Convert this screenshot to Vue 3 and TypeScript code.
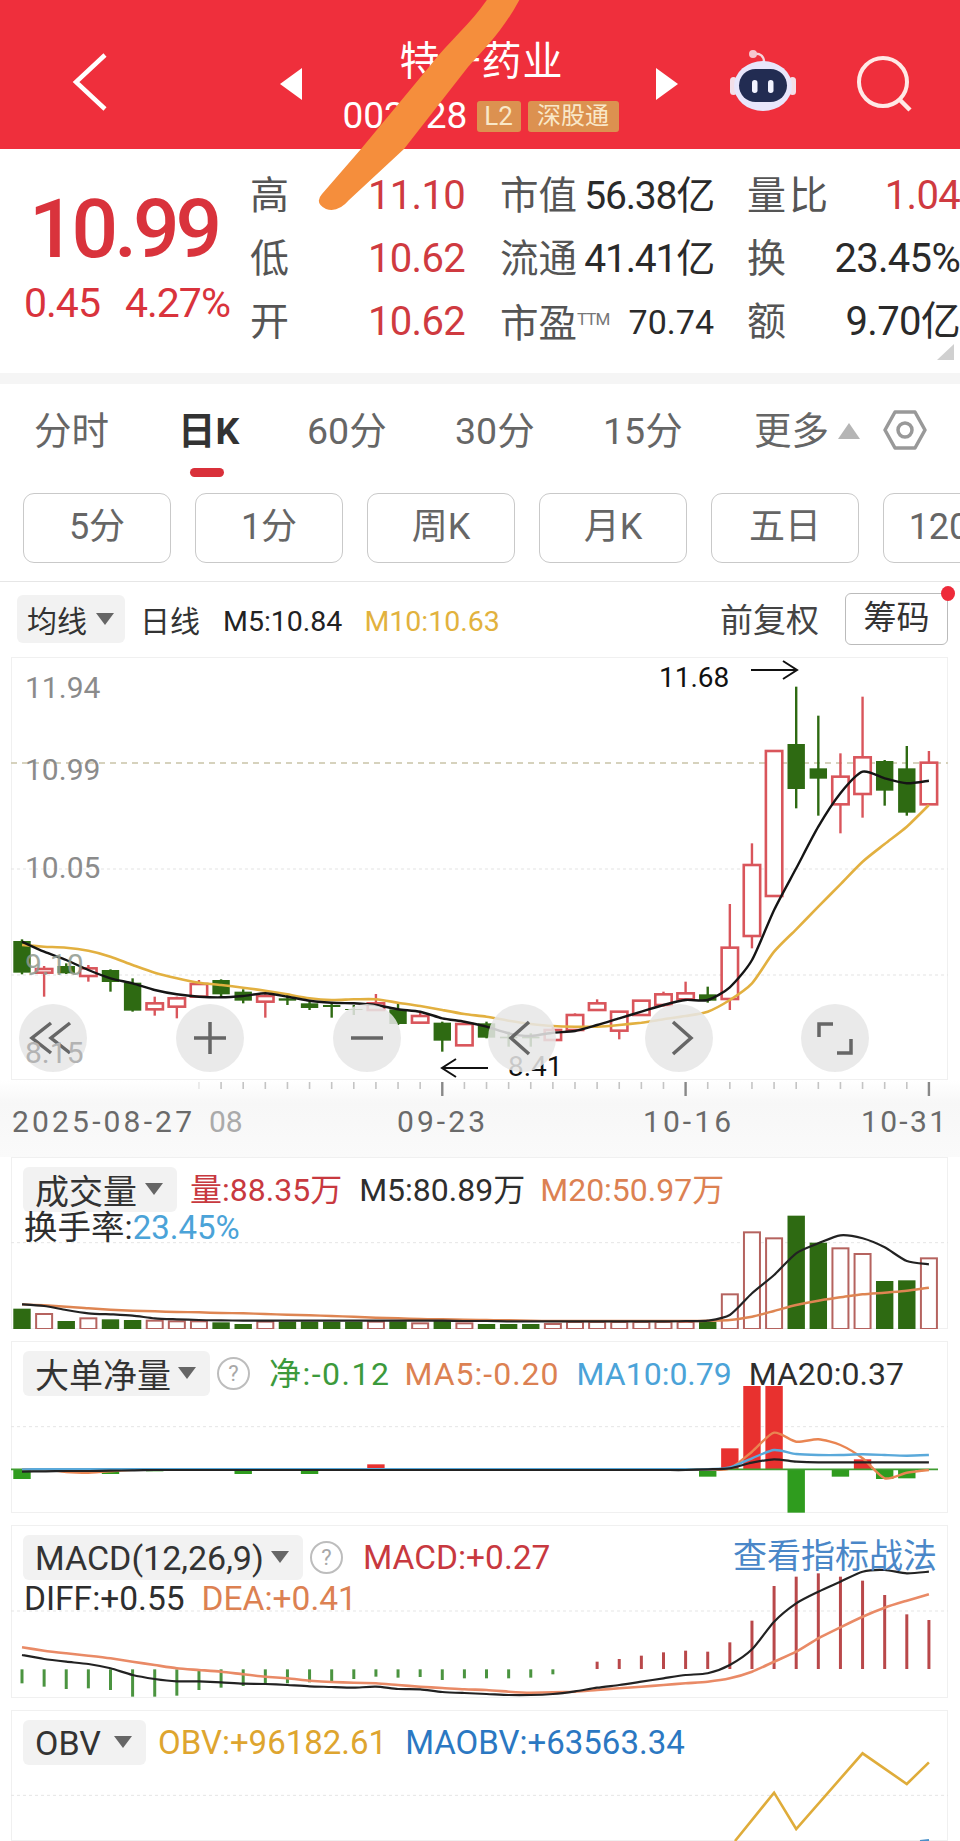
<script setup lang="ts">
type Candle = [string, number, number, number, number]

const cx = (i: number) => 22 + 22.12 * i
const my = (z: number) => 650 + z / 3
const ny = (z: number) => 1150 + z / 3
const ly = (z: number) => 1510 + z / 3

function smooth(ys: number[], conv: (z: number) => number): string {
  const p = ys.map((y, i) => [cx(i), conv(y)])
  let d = `M${p[0][0]} ${p[0][1]}`
  for (let i = 0; i < p.length - 1; i++) {
    const a = p[Math.max(i - 1, 0)]
    const b = p[i]
    const c = p[i + 1]
    const e = p[Math.min(i + 2, p.length - 1)]
    const k = 0.12
    d += `C${(b[0] + (c[0] - a[0]) * k).toFixed(1)} ${(b[1] + (c[1] - a[1]) * k).toFixed(1)} ${(c[0] - (e[0] - b[0]) * k).toFixed(1)} ${(c[1] - (e[1] - b[1]) * k).toFixed(1)} ${c[0].toFixed(1)} ${c[1].toFixed(1)}`
  }
  return d
}

const candles: Candle[] = [
  ['g', 868, 973, 873, 968], ['r', 948, 1040, 957, 968], ['g', 940, 972, 948, 970], ['r', 945, 995, 955, 978],
  ['g', 958, 1025, 960, 996], ['g', 985, 1085, 998, 1082], ['r', 1040, 1097, 1060, 1078], ['r', 1040, 1105, 1045, 1070],
  ['r', 990, 1040, 1002, 1040], ['g', 988, 1040, 990, 1033], ['g', 1018, 1060, 1025, 1052], ['r', 1030, 1103, 1038, 1055],
  ['g', 1035, 1065, 1045, 1052], ['g', 1055, 1080, 1060, 1074], ['g', 1058, 1103, 1065, 1071], ['g', 1065, 1095, 1077, 1080],
  ['r', 1032, 1080, 1060, 1080], ['g', 1060, 1125, 1078, 1122], ['r', 1085, 1120, 1098, 1118], ['g', 1115, 1205, 1118, 1172],
  ['r', 1120, 1188, 1122, 1186], ['g', 1115, 1165, 1120, 1163], ['g', 1145, 1190, 1160, 1165], ['g', 1150, 1190, 1160, 1165],
  ['r', 1130, 1172, 1140, 1170], ['r', 1090, 1140, 1095, 1140], ['r', 1048, 1082, 1060, 1080], ['r', 1085, 1168, 1085, 1142],
  ['r', 1050, 1095, 1052, 1095], ['r', 1025, 1070, 1033, 1065], ['r', 995, 1050, 1030, 1048], ['g', 1010, 1058, 1033, 1052],
  ['r', 762, 1080, 893, 1047], ['r', 580, 895, 645, 858], ['r', 303, 738, 303, 738], ['g', 110, 475, 282, 417],
  ['g', 197, 497, 355, 386], ['r', 310, 550, 380, 463], ['r', 140, 503, 322, 432], ['g', 330, 467, 333, 422],
  ['g', 288, 497, 355, 488], ['r', 303, 463, 338, 463]
]
const m5 = [875, 905, 930, 960, 985, 1000, 1020, 1033, 1040, 1042, 1038, 1030, 1040, 1052, 1058, 1060, 1065, 1078, 1085, 1105, 1115, 1130, 1150, 1158, 1148, 1143, 1125, 1105, 1085, 1065, 1050, 1050, 1012, 930, 780, 655, 530, 430, 365, 385, 400, 392]
const m10 = [885, 890, 893, 902, 920, 945, 968, 985, 998, 1005, 1013, 1022, 1033, 1045, 1050, 1048, 1048, 1058, 1068, 1080, 1092, 1100, 1112, 1122, 1128, 1130, 1130, 1125, 1118, 1108, 1098, 1085, 1050, 1000, 905, 838, 770, 703, 635, 582, 530, 465]

const volTops = [476, 492, 513, 505, 508, 510, 512, 514, 514, 517, 522, 515, 515, 515, 515, 515, 515, 514, 520, 513, 520, 522, 522, 522, 522, 516, 516, 516, 516, 516, 516, 515, 433, 247, 265, 197, 278, 295, 312, 393, 391, 325]
const volM5 = [463, 468, 480, 490, 493, 497, 505, 508, 510, 511, 512, 512, 512, 512, 512, 512, 512, 512, 512, 512, 513, 513, 514, 514, 514, 514, 514, 514, 514, 514, 513, 512, 495, 430, 375, 310, 280, 256, 265, 292, 333, 343]
const volM20 = [463, 466, 470, 475, 479, 482, 484, 486, 487, 489, 490, 492, 494, 496, 498, 500, 503, 505, 507, 508, 509, 510, 511, 512, 513, 513, 513, 513, 513, 513, 513, 512, 510, 500, 483, 465, 452, 442, 433, 428, 422, 413]

const netBars: [number, string, number][] = [
  [0, 'g', 987], [4, 'g', 972], [6, 'g', 964], [10, 'g', 972], [13, 'g', 972], [16, 'r', 943], [31, 'g', 980], [32, 'r', 895],
  [33, 'r', 708], [34, 'r', 708], [35, 'g', 1088], [37, 'g', 980], [38, 'r', 928], [39, 'g', 987], [40, 'g', 985]
]
const flat = (v: number, n: number) => Array.from({ length: n }, () => v)
const netMa5 = [...flat(958, 2), 966, 968, 964, ...flat(959, 27), 955, 905, 848, 875, 868, 885, 925, 985, 968, 960]
const netMa10 = [...flat(958, 32), 952, 925, 900, 912, 915, 915, 913, 915, 917, 915]
const netMa20 = [965, 964, 963, 963, 962, 961, ...flat(960, 25), 958, 955, 938, 928, 935, 937, 937, 937, 937, 937, 937]

const macdBars: [string, number][] = [
  ['g', 520], ['g', 530], ['g', 537], ['g', 535], ['g', 540], ['g', 560], ['g', 560], ['g', 557], ['g', 540], ['g', 533], ['g', 528],
  ['g', 525], ['g', 520], ['g', 517], ['g', 513], ['g', 507], ['g', 500], ['g', 503], ['g', 501], ['g', 510], ['g', 505], ['g', 505],
  ['g', 505], ['g', 503], ['g', 493], ['g', 478], ['r', 455], ['r', 447], ['r', 437], ['r', 427], ['r', 422], ['r', 425], ['r', 397],
  ['r', 332], ['r', 228], ['r', 200], ['r', 190], ['r', 200], ['r', 212], ['r', 255], ['r', 313], ['r', 330]
]
const diff = [435, 447, 455, 462, 475, 495, 507, 514, 514, 517, 521, 522, 525, 529, 531, 533, 530, 537, 538, 546, 549, 552, 555, 555, 552, 544, 533, 525, 515, 505, 495, 490, 465, 418, 335, 280, 245, 215, 185, 180, 190, 185]
const dea = [412, 422, 430, 437, 445, 455, 465, 475, 480, 485, 493, 500, 505, 512, 516, 518, 520, 525, 530, 534, 538, 540, 545, 548, 547, 545, 540, 535, 530, 525, 520, 515, 505, 485, 455, 425, 385, 352, 320, 293, 272, 253]

const quoteRows = [
  { a: '高', b: '11.10', c: '市值', d: '56.38亿', e: '量比', f: '1.04', red: true, wide: true },
  { a: '低', b: '10.62', c: '流通', d: '41.41亿', e: '换', f: '23.45%', red: false },
  { a: '开', b: '10.62', c: '市盈', d: '70.74', e: '额', f: '9.70亿', red: false, ttm: true }
]
const tabs = [
  { t: '分时', w: 144 }, { t: '日K', w: 129, on: true }, { t: '60分', w: 148 }, { t: '30分', w: 148 }, { t: '15分', w: 151 }
]
const subs = ['5分', '1分', '周K', '月K', '五日', '120分']
const bubbles = [
  { x: 53, k: 'first' }, { x: 210, k: 'plus' }, { x: 367, k: 'minus' }, { x: 522, k: 'left' }, { x: 679, k: 'right' }, { x: 835, k: 'full' }
]
</script>

<template>
  <div class="page">
    <header class="top">
      <svg class="back" viewBox="0 0 40 60" width="40" height="60"><path d="M35 3 L6 30 L35 57" fill="none" stroke="#fff" stroke-width="4.5" /></svg>
      <svg class="arrow" viewBox="0 0 22 32" width="22" height="32"><path d="M22 0 V32 L0 16Z" fill="#fff" /></svg>
      <div class="name">
        <div class="title">特一药业</div>
        <div class="codeline">
          <span class="code">002728</span><span class="tag l2">L2</span><span class="tag sgt">深股通</span>
        </div>
      </div>
      <svg class="arrow" viewBox="0 0 22 32" width="22" height="32"><path d="M0 0 V32 L22 16Z" fill="#fff" /></svg>
      <svg class="robot" viewBox="0 0 68 62" width="68" height="62">
        <path d="M35 12 C35 6 31 3 25 4" fill="none" stroke="#f4d4dc" stroke-width="2.4" />
        <circle cx="24" cy="4" r="4" fill="#f6c6cf" />
        <rect x="1" y="27" width="7" height="18" rx="3.5" fill="#f3dfe8" />
        <rect x="60" y="27" width="7" height="18" rx="3.5" fill="#f3dfe8" />
        <ellipse cx="34" cy="36" rx="29" ry="25" fill="#e8e6fb" />
        <rect x="10" y="19" width="48" height="33" rx="16.5" fill="#222c52" />
        <rect x="23" y="30" width="5.5" height="13" rx="2.7" fill="#f2f3ff" />
        <rect x="39" y="30" width="5.5" height="13" rx="2.7" fill="#f2f3ff" />
      </svg>
      <svg class="search" viewBox="0 0 56 56" width="56" height="56"><circle cx="26" cy="26" r="24" fill="none" stroke="#ffe9e6" stroke-width="4" /><path d="M43 44 L53 54" stroke="#ffe9e6" stroke-width="4.5" /></svg>
    </header>

    <section class="quote">
      <div class="now">
        <div class="price">10.99</div>
        <div class="chg"><span>0.45</span><span>4.27%</span></div>
      </div>
      <div class="qgrid">
        <template v-for="r in quoteRows" :key="r.a">
          <span class="ql">{{ r.a }}</span>
          <span class="qv red first">{{ r.b }}</span>
          <span class="ql small">{{ r.c }}<i v-if="r.ttm" class="ttm">TTM</i></span>
          <span class="qv dark mid" :class="{ narrow: r.ttm }">{{ r.d }}</span>
          <span class="ql" :class="{ spaced: r.wide }">{{ r.e }}</span>
          <span class="qv dark" :class="{ red: r.red }">{{ r.f }}</span>
        </template>
      </div>
      <i class="corner"></i>
    </section>
    <div class="strip"></div>

    <nav class="tabs">
      <span v-for="t in tabs" :key="t.t" class="tab" :class="{ on: t.on }" :style="{ width: t.w + 'px' }">{{ t.t }}</span>
      <span class="tab more">更多<i class="up"></i></span>
      <svg class="hex" viewBox="0 0 44 40" width="44" height="40"><path d="M12 2 H32 L42 20 L32 38 H12 L2 20Z" fill="none" stroke="#999" stroke-width="3.5" stroke-linejoin="round" /><circle cx="22" cy="20" r="7" fill="none" stroke="#999" stroke-width="3.5" /></svg>
    </nav>

    <div class="subs">
      <span v-for="s in subs" :key="s" class="sub">{{ s }}</span>
    </div>

    <div class="marow">
      <span class="pill small-pill">均线<i class="down"></i></span>
      <span class="ma-label">日线</span>
      <span class="ma-val">M5:10.84</span>
      <span class="ma-val gold">M10:10.63</span>
      <span class="fq">前复权</span>
      <span class="chips">筹码<i class="dot"></i></span>
    </div>

    <section class="panel main">
      <svg class="plot" viewBox="11 657 937 423">
        <line x1="11" x2="948" y1="763" y2="763" stroke="#c9c4a8" stroke-width="1.4" stroke-dasharray="6 5" />
        <line x1="11" x2="948" :y1="my(657)" :y2="my(657)" stroke="#e3e3e3" stroke-dasharray="3 3" />
        <line x1="11" x2="948" :y1="my(975)" :y2="my(975)" stroke="#e3e3e3" stroke-dasharray="3 3" />
        <g v-for="(c, i) in candles" :key="i">
          <line :x1="cx(i)" :x2="cx(i)" :y1="my(c[1])" :y2="my(c[2])" :stroke="c[0] === 'g' ? '#2e6a12' : '#d9555b'" stroke-width="2.4" />
          <rect v-if="c[0] === 'g'" :x="cx(i) - 8.7" :y="my(c[3])" width="17.4" :height="(c[4] - c[3]) / 3" fill="#2e6a12" />
          <rect v-else :x="cx(i) - 8.2" :y="my(c[3])" width="16.4" :height="(c[4] - c[3]) / 3" fill="#fff" stroke="#d9555b" stroke-width="2.6" />
        </g>
        <path :d="smooth(m10, my)" fill="none" stroke="#e2b040" stroke-width="2.6" />
        <path :d="smooth(m5, my)" fill="none" stroke="#151515" stroke-width="2.4" />
        <g class="ylab">
          <text x="25" y="698">11.94</text>
          <text x="25" y="780">10.99</text>
          <text x="25" y="878">10.05</text>
          <text x="25" y="975" class="fade">9.10</text>
        </g>
        <text x="659" y="687" class="note">11.68</text>
        <path d="M751 670 H796 M783 661 L797 670 L783 679" fill="none" stroke="#111" stroke-width="2" />
        <text x="508" y="1076" class="note">8.41</text>
        <path d="M488 1068 H443 M456 1059 L442 1068 L456 1077" fill="none" stroke="#111" stroke-width="2" />
      </svg>
      <span v-for="b in bubbles" :key="b.k" class="bubble" :style="{ left: b.x - 45 + 'px' }">
        <svg viewBox="0 0 68 68" width="68" height="68">
          <path v-if="b.k === 'first'" d="M32 19 L13 34 L32 49 M51 19 L32 34 L51 49" fill="none" stroke="#666" stroke-width="3.5" />
          <path v-else-if="b.k === 'plus'" d="M18 34 H50 M34 18 V50" fill="none" stroke="#666" stroke-width="3.5" />
          <path v-else-if="b.k === 'minus'" d="M18 34 H50" fill="none" stroke="#666" stroke-width="3.5" />
          <path v-else-if="b.k === 'left'" d="M41 18 L23 34 L41 50" fill="none" stroke="#666" stroke-width="3.5" />
          <path v-else-if="b.k === 'right'" d="M28 18 L46 34 L28 50" fill="none" stroke="#666" stroke-width="3.5" />
          <path v-else d="M18 33 V20 H32 M50 35 V49 H36" fill="none" stroke="#666" stroke-width="3.5" />
        </svg>
      </span>
      <span class="low-label">8.15</span>
    </section>

    <svg class="axis" viewBox="0 1080 960 77" width="960" height="77">
      <defs>
        <linearGradient id="ax" x1="0" x2="0" y1="0" y2="1"><stop offset="0" stop-color="#fff" /><stop offset=".3" stop-color="#f7f7f7" /><stop offset="1" stop-color="#fafafa" /></linearGradient>
      </defs>
      <rect x="0" y="1080" width="960" height="77" fill="url(#ax)" />
      <g v-for="i in 34" :key="i">
        <line :x1="cx(i + 7)" :x2="cx(i + 7)" y1="1082" :y2="[12, 23, 34].includes(i) ? 1096 : 1089" :stroke="i === 1 ? '#e6e6e6' : [12, 23, 34].includes(i) ? '#888' : '#c4c4c4'" :stroke-width="[12, 23, 34].includes(i) ? 2.4 : 1.6" />
      </g>
      <g class="xlab">
        <text x="12" y="1132" textLength="180">2025-08-27</text>
        <text x="209" y="1132" class="faded">08</text>
        <text x="397" y="1132" textLength="88">09-23</text>
        <text x="643" y="1132" textLength="88">10-16</text>
        <text x="861" y="1132" textLength="85">10-31</text>
      </g>
    </svg>

    <section class="panel vol">
      <svg class="plot" viewBox="11 1157 937 172">
        <line x1="11" x2="948" :y1="ny(278)" :y2="ny(278)" stroke="#e5e5e5" stroke-dasharray="3 3" />
        <g v-for="(t, i) in volTops" :key="i">
          <rect v-if="candles[i][0] === 'g'" :x="cx(i) - 8.7" :y="ny(t)" width="17.4" :height="(538 - t) / 3" fill="#2e6a12" />
          <rect v-else :x="cx(i) - 8" :y="ny(t)" width="16" :height="(537 - t) / 3" fill="#fff" stroke="#b5635f" stroke-width="2" />
        </g>
        <path :d="smooth(volM20, ny)" fill="none" stroke="#de8552" stroke-width="2.4" />
        <path :d="smooth(volM5, ny)" fill="none" stroke="#222" stroke-width="2.2" />
      </svg>
      <div class="legend">
        <span class="pill w154">成交量<i class="down"></i></span>
        <span class="lg red g13">量:88.35万</span>
        <span class="lg dark g17">M5:80.89万</span>
        <span class="lg orange g15">M20:50.97万</span>
      </div>
      <div class="legend2"><span class="lg big dark">换手率:</span><span class="lg big2 blue">23.45%</span></div>
    </section>

    <section class="panel net">
      <svg class="plot" viewBox="11 1341 937 172">
        <line x1="11" x2="948" :y1="ny(830)" :y2="ny(830)" stroke="#e5e5e5" stroke-dasharray="3 3" />
        <g v-for="b in netBars" :key="b[0]">
          <rect :x="cx(b[0]) - 8.7" :y="ny(Math.min(b[2], 958))" width="17.4" :height="Math.abs(b[2] - 958) / 3" :fill="b[1] === 'r' ? '#e8312f' : '#2f9c1e'" />
        </g>
        <line x1="11" x2="938" :y1="ny(958)" :y2="ny(958)" stroke="#3f9c30" stroke-width="1.8" />
        <path :d="smooth(netMa5, ny)" fill="none" stroke="#e98552" stroke-width="2.4" />
        <path :d="smooth(netMa10, ny)" fill="none" stroke="#5aa9da" stroke-width="2.4" />
        <path :d="smooth(netMa20, ny)" fill="none" stroke="#222" stroke-width="2.2" />
      </svg>
      <div class="legend">
        <span class="pill w187">大单净量<i class="down"></i></span>
        <span class="help">?</span>
        <span class="lg green g19 sp15">净:-0.12</span>
        <span class="lg orange g14 sp10">MA5:-0.20</span>
        <span class="lg blue g17">MA10:0.79</span>
        <span class="lg dark g17">MA20:0.37</span>
      </div>
    </section>

    <section class="panel macd">
      <svg class="plot" viewBox="11 1525 937 173">
        <line x1="11" x2="948" :y1="ly(303)" :y2="ly(303)" stroke="#e5e5e5" stroke-dasharray="3 3" />
        <g v-for="(b, i) in macdBars" :key="i">
          <line :x1="cx(i)" :x2="cx(i)" :y1="b[0] === 'g' ? ly(478) : ly(b[1])" :y2="b[0] === 'g' ? ly(b[1]) : ly(477)" :stroke="b[0] === 'g' ? '#4b9440' : '#b9484a'" stroke-width="3" />
        </g>
        <path :d="smooth(dea, ly)" fill="none" stroke="#e98a66" stroke-width="2.6" />
        <path :d="smooth(diff, ly)" fill="none" stroke="#222" stroke-width="2.2" />
      </svg>
      <div class="legend">
        <span class="pill w280">MACD(12,26,9)<i class="down"></i></span>
        <span class="help">?</span>
        <span class="lg big red g20">MACD:+0.27</span>
        <span class="link">查看指标战法</span>
      </div>
      <div class="legend2 diff"><span class="lg big dark">DIFF:+0.55</span><span class="lg big orange g17">DEA:+0.41</span></div>
    </section>

    <section class="panel obv">
      <svg class="plot" viewBox="11 1710 937 131">
        <line x1="11" x2="948" :y1="ly(856)" :y2="ly(856)" stroke="#e5e5e5" stroke-dasharray="3 3" />
        <path :d="`M735 1841 L${cx(34)} ${ly(848)} L${cx(35)} ${ly(957)} L${cx(38)} ${ly(730)} L${cx(40)} ${ly(822)} L${cx(41)} ${ly(757)}`" fill="none" stroke="#dfac3a" stroke-width="2.6" />
        <path d="M920 1841 L929 1840" fill="none" stroke="#4a90c8" stroke-width="2" />
      </svg>
      <div class="legend">
        <span class="pill w123">OBV<i class="down"></i></span>
        <span class="lg big2 gold2 g12">OBV:+96182.61</span>
        <span class="lg big2 navy g18">MAOBV:+63563.34</span>
      </div>
    </section>

    <svg class="stroke" viewBox="0 0 960 215" width="960" height="215"><path d="M490 -5 L522 -5 C 505 28 488 45 468 67 L404 149 L349 200 Q338 213 326 209 Q314 203 322 194 L361 149 L429 67 C 450 40 475 20 490 -5Z" fill="#f58e3c" /></svg>
  </div>
</template>

<style>
html, body { margin: 0; background: #fff; }
</style>

<style scoped>
.page { position: relative; width: 960px; height: 1841px; overflow: hidden; background: #fff; font-family: Roboto, "Noto Sans CJK SC", sans-serif; }
i { font-style: normal; }
.top { height: 149px; background: #ef2f3c; display: flex; align-items: flex-start; color: #fff; }
.back { margin: 52px 0 0 70px; }
.arrow { margin-top: 68px; flex: none; }
.back + .arrow { margin-left: 170px; }
.name { width: 354px; display: flex; flex-direction: column; align-items: center; flex: none; }
.title { margin-top: 36px; height: 52px; font-size: 40px; line-height: 52px; letter-spacing: 1px; text-indent: 5px; }
.codeline { display: flex; align-items: center; height: 36px; margin-top: 10px; margin-left: 3px; }
.code { font-size: 37px; line-height: 36px; width: 134px; }
.tag { background: #dc9150; color: #f9e8c9; height: 31px; line-height: 31px; font-size: 24px; text-align: center; border-radius: 3px; }
.l2 { width: 44px; margin-right: 7px; font-size: 26px; }
.sgt { width: 91px; }
.robot { margin: 50px 0 0 51px; flex: none; }
.search { margin: 56px 0 0 60px; flex: none; }

.quote { position: relative; height: 224px; display: flex; }
.now { width: 250px; color: #d9333c; flex: none; }
.price { margin: 40px 0 0 29px; font-size: 82px; line-height: 80px; font-weight: 500; letter-spacing: -4px; white-space: nowrap; }
.chg { margin: 14px 0 0 24px; font-size: 41px; line-height: 40px; display: flex; gap: 25px; letter-spacing: -1px; }
.qgrid { margin-top: 15px; display: grid; grid-template-columns: 118px 132px 84px 163px 83px 130px; grid-auto-rows: 63px; width: 710px; align-items: center; }
.ql { font-size: 39px; color: #555; line-height: 44px; white-space: nowrap; }
.ql.small { font-size: 38.5px; }
.ql.spaced { letter-spacing: 3px; }
.ttm { font-size: 17px; color: #777; vertical-align: 12px; letter-spacing: -1px; }
.qv { font-size: 40px; line-height: 44px; white-space: nowrap; text-align: right; letter-spacing: -.7px; }
.qv.first { text-align: left; }
.qv.mid { padding-right: 33px; font-size: 39px; letter-spacing: -1.2px; }
.qv.mid.narrow { font-size: 34px; letter-spacing: 0; }
.qv.red { color: #cf3a40; }
.qv.dark { color: #2a2a2a; }
.qv.dark.red { color: #cf3a40; }
.corner { position: absolute; right: 6px; bottom: 13px; width: 0; height: 0; border-left: 17px solid transparent; border-bottom: 16px solid #d0d0d0; }
.strip { height: 11px; background: #f5f5f5; }

.tabs { position: relative; height: 98px; display: flex; padding-left: 34px; align-items: flex-start; }
.tab { font-size: 37.5px; line-height: 46px; margin-top: 24px; color: #666; flex: none; white-space: nowrap; }
.tab.on { color: #333; font-weight: 700; position: relative; }
.tab.on::after { content: ""; position: absolute; left: 12px; top: 60px; width: 34px; height: 9px; border-radius: 5px; background: #d9303a; }
.more { display: flex; align-items: center; }
.up { margin-left: 9px; width: 0; height: 0; border-left: 11px solid transparent; border-right: 11px solid transparent; border-bottom: 16px solid #b5b5b5; }
.hex { position: absolute; left: 883px; top: 26px; }

.subs { display: flex; gap: 24px; padding: 11px 0 0 23px; height: 70px; overflow: hidden; }
.sub { flex: none; box-sizing: border-box; width: 148px; height: 70px; border: 1.4px solid #c9c9c9; border-radius: 11px; color: #666; font-size: 36px; line-height: 66px; text-align: center; }

.marow { margin-top: 18px; border-top: 1px solid #e6e6e6; height: 75px; display: flex; align-items: flex-start; padding-left: 17px; position: relative; }
.pill { display: inline-flex; align-items: center; box-sizing: border-box; height: 45px; background: #f2f2f2; border-radius: 6px; padding-left: 12px; font-size: 34px; color: #333; position: relative; white-space: nowrap; flex: none; }
.down { position: absolute; right: 14px; top: 16px; width: 0; height: 0; border-left: 9px solid transparent; border-right: 9px solid transparent; border-top: 12px solid #666; }
.small-pill { width: 108px; height: 48px; margin-top: 13px; padding-left: 10px; font-size: 30px; }
.small-pill .down { right: 11px; top: 18px; }
.ma-label { font-size: 30px; color: #333; margin: 22px 0 0 15px; line-height: 36px; }
.ma-val { font-size: 28.5px; color: #222; margin: 22px 0 0 23px; line-height: 36px; }
.ma-val.gold { color: #e2b23e; margin-left: 22px; }
.fq { position: absolute; left: 720px; top: 18px; font-size: 33px; line-height: 42px; color: #444; }
.chips { position: absolute; left: 845px; top: 11px; width: 103px; height: 52px; box-sizing: border-box; border: 1.4px solid #bbb; border-radius: 6px; font-size: 33px; line-height: 48px; text-align: center; color: #333; }
.dot { position: absolute; right: -8px; top: -8px; width: 14px; height: 15px; border-radius: 50%; background: #ee2a3a; }

.panel { position: relative; margin-left: 11px; width: 937px; box-sizing: border-box; box-shadow: inset 0 0 0 1px #f0f0f0; }
.plot { position: absolute; left: 0; top: 0; width: 100%; height: 100%; overflow: hidden; }
.main { height: 423px; }
.vol { height: 172px; }
.net { height: 172px; margin-top: 12px; }
.macd { height: 173px; margin-top: 12px; }
.obv { height: 131px; margin-top: 12px; }
.axis { display: block; }
.ylab text { font-family: Roboto, sans-serif; font-size: 30px; fill: #8b8b8b; }
.ylab text.fade { fill: #8f9a8f; opacity: .85; }
.low-label { position: absolute; left: 14px; top: 378px; font-family: Roboto, sans-serif; font-size: 30px; line-height: 36px; color: #b3b3b3; }
.note { font-family: Roboto, sans-serif; font-size: 28px; fill: #111; }
.xlab text { font-family: Roboto, sans-serif; font-size: 30px; fill: #6a6a6a; }
.xlab text.faded { fill: #aaa; }
.bubble { position: absolute; top: 347px; width: 68px; height: 68px; border-radius: 50%; background: rgba(231, 231, 231, .86); }
.bubble svg { display: block; }

.legend { position: relative; display: flex; align-items: center; padding: 10px 0 0 12px; height: 45px; }
.legend2 { position: relative; padding-left: 13px; height: 34px; display: flex; align-items: center; margin-top: -1px; }
.legend2.diff { margin-top: 2px; }
.lg { font-size: 32px; line-height: 40px; white-space: nowrap; flex: none; }
.lg.big { font-size: 33.5px; }
.lg.big2 { font-size: 33px; }
.sp15 { letter-spacing: 1.5px; }
.sp10 { letter-spacing: 1px; }
.w123 { width: 123px; }
.w154 { width: 154px; }
.w187 { width: 187px; }
.w280 { width: 280px; }
.g12 { margin-left: 12px; }
.g13 { margin-left: 13px; }
.g14 { margin-left: 14px; }
.g15 { margin-left: 15px; }
.g17 { margin-left: 17px; }
.g18 { margin-left: 18px; }
.g19 { margin-left: 19px; }
.g20 { margin-left: 20px; }
.red { color: #c8393f; }
.dark { color: #2e2e2e; }
.orange { color: #dc8152; }
.blue { color: #4ba3d8; }
.green { color: #3c9a3c; }
.gold2 { color: #dea52f; }
.navy { color: #2b78c2; }
.help { width: 29px; height: 29px; border: 2px solid #bdbdbd; border-radius: 50%; margin-left: 7px; color: #a8a8a8; font-size: 22px; line-height: 29px; text-align: center; flex: none; }
.link { position: absolute; left: 722px; top: 9px; font-size: 34px; line-height: 44px; color: #4a87c8; white-space: nowrap; }
.stroke { position: absolute; left: 0; top: 0; }
</style>
